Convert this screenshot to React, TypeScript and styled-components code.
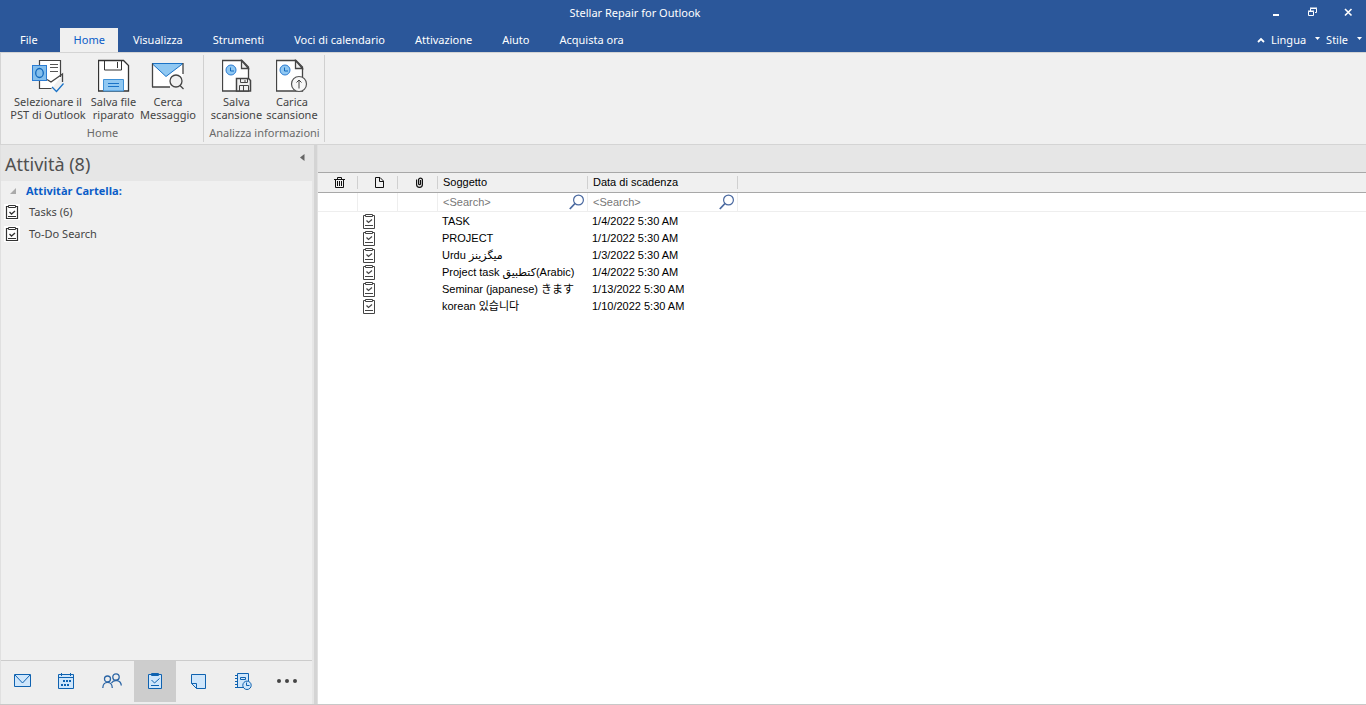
import React from "react";
import styled, { createGlobalStyle, css } from "styled-components";

const uiFont = '"Noto Sans", "Open Sans", sans-serif';
const gridFont = '"Liberation Sans", "DejaVu Sans", "Noto Sans CJK JP", "Noto Sans CJK KR", sans-serif';

const GlobalStyle = createGlobalStyle`
  * { box-sizing: border-box; }
  body { margin: 0; font-family: ${uiFont}; font-size: 11px; color: #444; background: #fff; }
  button, input { font: inherit; color: inherit; }
  button { border: 0; padding: 0; background: none; }
  svg { display: block; flex: none; }
`;

const Window = styled.div`
  display: flex;
  flex-direction: column;
  min-height: 100vh;
  border-bottom: 1px solid #c8c8c8;
`;

const TitleBar = styled.header`
  display: grid;
  grid-template-columns: 1fr auto 1fr;
  align-items: center;
  height: 28px;
  padding-right: 12px;
  background: #2b579a;
  color: #fff;
`;

const AppTitle = styled.h1`
  grid-column: 2;
  align-self: start;
  margin: 0 84px 0 0;
  font-size: 11px;
  font-weight: 400;
  line-height: 26px;
`;

const WindowControls = styled.div`
  display: flex;
  justify-content: flex-end;
  gap: 24px;
  padding-bottom: 4px;
`;

const MenuBar = styled.nav`
  display: flex;
  height: 24px;
  background: #2b579a;
  color: #fff;
`;

const Tab = styled.button<{ $active?: boolean; $first?: boolean }>`
  padding: 0 15px;
  line-height: 24px;
  ${(p) => p.$first && css`padding: 0 22px 0 20px;`}
  ${(p) => p.$active && css`
    padding: 0 13px 0 14px;
    background: #f0f0f0;
    color: #0a5cc8;
  `}
`;

const MenuRight = styled.div`
  display: flex;
  align-items: center;
  gap: 6px;
  margin-left: auto;
  padding-right: 4px;
`;

const MenuButton = styled.button`
  display: flex;
  align-items: center;
  gap: 9px;
  line-height: 24px;
`;

const Ribbon = styled.section`
  display: flex;
  height: 93px;
  padding-top: 2px;
  border: 1px solid #d4d4d4;
  border-right: 0;
  background: #f0f0f0;
`;

const RibbonGroup = styled.div`
  display: flex;
  flex-direction: column;
  height: 87px;
  padding: 4px 4px 0 5px;
  border-right: 1px solid #d0d0d0;
`;

const RibbonButtons = styled.div`
  display: flex;
  justify-content: center;
`;

const RibbonButton = styled.button<{ $width: number }>`
  display: flex;
  flex-direction: column;
  align-items: center;
  gap: 2px;
  width: ${(p) => p.$width}px;
  line-height: 13px;
  white-space: nowrap;
`;

const GroupLabel = styled.div`
  padding-top: 4px;
  line-height: 16px;
  text-align: center;
  color: #6a6a6a;
  white-space: nowrap;
`;

const Body = styled.div`
  display: flex;
  flex: 1;
`;

const Sidebar = styled.aside`
  display: flex;
  flex-direction: column;
  width: 314px;
  padding: 0 2px 0 0;
  border-left: 1px solid #e0e0e0;
  background: #e6e6e6;
`;

const Splitter = styled.div`
  width: 4px;
  border-right: 1px solid #e0e0e0;
  background: #d4d4d4;
`;

const SideHeader = styled.div`
  display: flex;
  justify-content: space-between;
  height: 36px;
  padding: 0 7px 0 4px;
`;

const SideTitle = styled.h2`
  margin: 0;
  font-size: 18px;
  font-weight: 400;
  line-height: 39px;
  color: #505050;
`;

const CollapseButton = styled.button`
  align-self: flex-start;
  padding-top: 9px;
`;

const FolderPane = styled.div`
  flex: 1;
  background: #f0f0f0;
`;

const FolderHeading = styled.button`
  display: flex;
  align-items: center;
  gap: 10px;
  height: 20px;
  padding: 0 9px;
  font-family: "Open Sans", sans-serif;
  font-weight: 700;
  line-height: 18px;
  color: #0a5cc8;
`;

const FolderLink = styled.a`
  display: flex;
  gap: 9px;
  height: 22px;
  padding: 3px 0 0 3px;
  line-height: 16px;
  color: #444;
  text-decoration: none;
`;

const ModuleNav = styled.nav`
  display: flex;
  height: 44px;
  border-top: 1px solid #ccc;
  background: #eee;
`;

const ModuleButton = styled.button<{ $active?: boolean; $width: number }>`
  display: flex;
  align-items: center;
  justify-content: center;
  width: ${(p) => p.$width}px;
  height: 41px;
  padding-bottom: 1px;
  background: ${(p) => (p.$active ? "#cdcdcd" : "none")};
`;

const Content = styled.main`
  flex: 1;
  padding-top: 27px;
  background: linear-gradient(#e6e6e6 27px, #fff 27px);
`;

const TaskTable = styled.table`
  width: 100%;
  table-layout: fixed;
  border-spacing: 0;
  font-family: ${gridFont};
  font-size: 11px;
  color: #000;
`;

const HeadCell = styled.th<{ $last?: boolean }>`
  height: 21px;
  padding: 0 0 0 5px;
  border: solid #a8a8a8;
  border-width: 1px 0;
  background: linear-gradient(#d0d0d0, #d0d0d0) right center / ${(p) => (p.$last ? 0 : 1)}px 13px no-repeat #f0f0f0;
  font-weight: 400;
  line-height: 19px;
  text-align: left;
`;

const HeadIcon = styled.span`
  display: flex;
  justify-content: center;
  padding-right: 2px;
`;

const FilterCell = styled.td<{ $last?: boolean }>`
  height: 19px;
  padding: 0;
  border-bottom: 1px solid #eee;
  border-right: ${(p) => (p.$last ? 0 : 1)}px solid #eee;
`;

const FilterBox = styled.label`
  display: flex;
  align-items: center;
  height: 18px;
  padding: 0 3px 0 5px;
`;

const FilterInput = styled.input`
  flex: 1;
  min-width: 0;
  height: 18px;
  padding: 0;
  border: 0;
  outline: 0;
  background: none;
  &::placeholder { color: #777; opacity: 1; }
`;

const Cell = styled.td`
  height: 17px;
  padding: 0 0 0 4px;
  line-height: 17px;
  white-space: nowrap;
  overflow: hidden;
`;

const CellLine = styled.div`
  height: 17px;
  line-height: 18px;
`;

const CellIcon = styled.div`
  display: flex;
  align-items: flex-end;
  height: 17px;
  padding-left: 1px;
`;

const SelectPstIcon = () => (
  <svg width="32" height="34" viewBox="0 0 32 34" fill="none" stroke="#444">
    <path d="M7.500 1.500h21v17l-9 11h-12z" fill="#fff" stroke="none" />
    <path d="M7.500 6V1.500h21V18" strokeWidth="1.200" />
    <path d="M7.500 22v7.500h12" strokeWidth="1.200" />
    <path d="M18 5.500h8M18 8.500h8M18 12.500h8" stroke="#555" />
    <path d="M15 20.500l4 2.500 11.500-8v8" strokeWidth="1.300" />
    <rect x=".5" y="6.500" width="14" height="15" fill="#83beec" stroke="#2b7cd3" />
    <ellipse cx="7.500" cy="14" rx="3.800" ry="4.500" stroke="#1168bd" strokeWidth="1.300" />
    <path d="M20 28l4.500 4.500 7-8" stroke="#1a73c7" strokeWidth="1.300" />
  </svg>
);

const SaveFileIcon = () => (
  <svg width="32" height="34" viewBox="0 0 32 34" fill="none" stroke="#333">
    <path d="M.5 1.500h25l5 5v25.500H.5z" fill="#fff" strokeWidth="1.300" />
    <path d="M6.500 1v10h17V1M19.500 3v6" />
    <path d="M5.500 32V20.500h20V32z" fill="#90c8f2" stroke="#3f91d6" />
    <path d="M10 24.500h11M10 27.500h11" stroke="#1a73c7" />
  </svg>
);

const SearchMailIcon = () => (
  <svg width="34" height="34" viewBox="0 0 34 34" fill="none" stroke="#444">
    <path d="M1 4h31v14l-8-2-5 5v7H1z" fill="#fff" stroke="none" />
    <path d="M1 4.500h31L15 17.500z" fill="#90c8f2" stroke="#1a73c7" />
    <path d="M1.500 28V4.500M1 28h18M32 4v11" strokeWidth="1.300" />
    <circle cx="25" cy="22" r="6" fill="#f0f0f0" strokeWidth="1.300" />
    <path d="M29 26.500l3.500 3.500" strokeWidth="1.300" />
  </svg>
);

const ScanPage = () => (
  <>
    <path d="M.5 1.500h19.500l6.500 6.500v24H.500z" fill="#fff" strokeWidth="1.300" />
    <path d="M19.500 1.500v8h7z" fill="#f0f0f0" strokeWidth="1.300" />
    <circle cx="9" cy="11" r="5" fill="#90c8f2" stroke="#2b7cd3" />
    <path d="M8.500 8.500v3.500h3.500" stroke="#1168bd" />
  </>
);

const SaveScanIcon = () => (
  <svg width="30" height="34" viewBox="0 0 30 34" fill="none" stroke="#444">
    <ScanPage />
    <path d="M14.500 19.500h12l2 2V32h-14z" fill="#f0f0f0" strokeWidth="1.500" />
    <path d="M18.500 19.500v4h7v-4M17.500 32v-5.500h9V32M21.500 27v5M23 21v2" />
  </svg>
);

const LoadScanIcon = () => (
  <svg width="32" height="34" viewBox="0 0 32 34" fill="none" stroke="#444">
    <ScanPage />
    <circle cx="23" cy="25" r="7.500" fill="#f7f7f7" stroke="#555" strokeWidth="1.200" />
    <path d="M23 29.500v-8M20.500 23.500L23 21l2.500 2.500" />
  </svg>
);

const ClipboardIcon = () => (
  <svg width="16" height="16" viewBox="0 0 16 16" fill="none" stroke="#333">
    <path d="M0 0h16v16H0z" fill="#fff" stroke="none" />
    <path d="M4.500 2.500h-2v12h11v-12h-2" strokeWidth="1.200" />
    <path d="M4.500 1.500h7v2h-7zM4 12.500h8" />
    <path d="M5.500 8l2 2 3.500-3" strokeWidth="1.300" />
  </svg>
);

const RowTaskIcon = () => (
  <svg width="12" height="16" viewBox="0 0 12 16" fill="none" stroke="#444">
    <path d="M2 2.500H.500v13h11v-13H10" />
    <path d="M2.500 1.500h7v2h-7zM2 12.500h8" />
    <path d="M3.500 7.500l2 2L9 6.500" strokeWidth="1.200" />
  </svg>
);

const LensIcon = () => (
  <svg width="15" height="16" viewBox="0 0 15 16" fill="none" stroke="#4a69a0">
    <circle cx="9.500" cy="6" r="4.900" strokeWidth="1.200" />
    <path d="M6 9.500L.8 15" strokeWidth="1.800" />
  </svg>
);

const TrashIcon = () => (
  <svg width="11" height="11" viewBox="0 0 11 11" fill="none" stroke="#111">
    <path d="M0 2.500h11M3.500 2V.500h4V2M1.500 3v7.500h8V3" />
    <path d="M3.500 4v5M5.500 4v5M7.500 4v5" />
  </svg>
);

const PageIcon = () => (
  <svg width="9" height="11" viewBox="0 0 9 11" fill="none" stroke="#111">
    <path d="M.500.500h4.500l3.500 3.500v6.500H.500zM4.500.500v4h4" />
  </svg>
);

const ClipIcon = () => (
  <svg width="7" height="11" viewBox="0 0 7 11" fill="none" stroke="#111" strokeWidth="1.200">
    <path d="M.600 2.500v5a2.800 2.800 0 0 0 5.800 0V2.500a2 2 0 0 0-3.800 0v4.500a1 1 0 0 0 1.900 0V3" />
  </svg>
);

const MailModuleIcon = () => (
  <svg width="17" height="14" viewBox="0 0 17 14" fill="#cfe6fb" stroke="#0f62b0">
    <path d="M.500.500h16v12H.500z" />
    <path d="M1 1l7.500 8L16 1" />
  </svg>
);

const CalendarModuleIcon = () => (
  <svg width="16" height="16" viewBox="0 0 16 16" fill="#cfe6fb" stroke="#0f62b0">
    <path d="M.500 1.500h15v14H.500zM0 4.500h16M3.500 0v3M12.500 0v3" />
    <path d="M5 8h2M8 8h2M11 8h2M3 12h2M6 12h2M9 12h2" strokeWidth="2" />
  </svg>
);

const PeopleModuleIcon = () => (
  <svg width="22" height="16" viewBox="-2 0 22 16" fill="none" stroke="#2b65a5" strokeWidth="1.300">
    <circle cx="5.500" cy="6" r="3" />
    <circle cx="14" cy="4" r="3.200" />
    <path d="M.800 15c0-7.500 9.500-7.500 9.500 0M9.500 10c2.500-4 9.500-3 9.800 2.500" />
  </svg>
);

const TaskModuleIcon = () => (
  <svg width="14" height="16" viewBox="0 0 14 16" fill="#cfe6fb" stroke="#0f62b0">
    <path d="M.500 1.500h13v14H.500zM3.500.500h7v2h-7z" />
    <path d="M3.500 7l3 3 5-4.500M3 12.500h8" fill="none" />
  </svg>
);

const NoteModuleIcon = () => (
  <svg width="15" height="16" viewBox="0 0 15 16" fill="#cfe6fb" stroke="#0f62b0">
    <path d="M.500 1.500h14v14h-9l-5-5zM.500 10.500h5v5" />
  </svg>
);

const JournalModuleIcon = () => (
  <svg width="17" height="18" viewBox="0 0 17 18" fill="#cfe6fb" stroke="#0f62b0">
    <path d="M2.500 1.500h11v14h-11zM5.500 5.500h5v2h-5zM0 3.500h3M0 6.500h3M0 9.500h3M0 12.500h3M0 15.500h3" />
    <circle cx="12" cy="13.300" r="4.200" />
    <path d="M11.500 10.500v3h3" fill="none" />
  </svg>
);

const MoreIcon = () => (
  <svg width="20" height="4" viewBox="0 0 20 4" fill="#444">
    <circle cx="2" cy="2" r="2" />
    <circle cx="10" cy="2" r="2" />
    <circle cx="18" cy="2" r="2" />
  </svg>
);

const DropArrow = () => (
  <svg width="5" height="9" viewBox="0 0 5 9" fill="#fff">
    <path d="M0 1h5L2.500 4z" />
  </svg>
);

const tabs = ["File", "Home", "Visualizza", "Strumenti", "Voci di calendario", "Attivazione", "Aiuto", "Acquista ora"];

const modules = [
  { name: "Posta", icon: <MailModuleIcon />, width: 43 },
  { name: "Calendario", icon: <CalendarModuleIcon />, width: 44 },
  { name: "Contatti", icon: <PeopleModuleIcon />, width: 46 },
  { name: "Attività", icon: <TaskModuleIcon />, width: 42, active: true },
  { name: "Note", icon: <NoteModuleIcon />, width: 45 },
  { name: "Diario", icon: <JournalModuleIcon />, width: 45 },
  { name: "Altro", icon: <MoreIcon />, width: 42 },
];

const tasks = [
  ["TASK", "1/4/2022 5:30 AM"],
  ["PROJECT", "1/1/2022 5:30 AM"],
  ["Urdu میگزینز", "1/3/2022 5:30 AM"],
  ["Project task کتطبیق(Arabic)", "1/4/2022 5:30 AM"],
  ["Seminar (japanese) きます", "1/13/2022 5:30 AM"],
  ["korean 있습니다", "1/10/2022 5:30 AM"],
];

export default function App() {
  return (
    <Window>
      <GlobalStyle />
      <TitleBar>
        <span />
        <AppTitle>Stellar Repair for Outlook</AppTitle>
        <WindowControls>
          <button aria-label="Riduci a icona">
            <svg width="12" height="10" viewBox="0 0 12 10" fill="#fff"><path d="M3 7h6v2H3z" /></svg>
          </button>
          <button aria-label="Ripristina">
            <svg width="12" height="10" viewBox="0 0 12 10" fill="none" stroke="#fff">
              <path d="M4.500 4V1.500h6v4H9M4 1h7M2.500 4.500h5v4h-5zM2 4h6" />
            </svg>
          </button>
          <button aria-label="Chiudi">
            <svg width="12" height="10" viewBox="0 0 12 10" stroke="#fff" strokeWidth="1.600"><path d="M3 2l6.500 6.500M9.500 2L3 8.500" /></svg>
          </button>
        </WindowControls>
      </TitleBar>
      <MenuBar>
        {tabs.map((t, i) => (
          <Tab key={t} $first={i === 0} $active={i === 1}>{t}</Tab>
        ))}
        <MenuRight>
          <button aria-label="Comprimi barra">
            <svg width="8" height="6" viewBox="0 0 8 6" fill="none" stroke="#fff" strokeWidth="1.800"><path d="M1 5l3-3 3 3" /></svg>
          </button>
          <MenuButton>Lingua <DropArrow /></MenuButton>
          <MenuButton>Stile <DropArrow /></MenuButton>
        </MenuRight>
      </MenuBar>
      <Ribbon>
        <RibbonGroup>
          <RibbonButtons>
            <RibbonButton $width={84}><SelectPstIcon /><span>Selezionare il<br />PST di Outlook</span></RibbonButton>
            <RibbonButton $width={47}><SaveFileIcon /><span>Salva file<br />riparato</span></RibbonButton>
            <RibbonButton $width={62}><SearchMailIcon /><span>Cerca<br />Messaggio</span></RibbonButton>
          </RibbonButtons>
          <GroupLabel>Home</GroupLabel>
        </RibbonGroup>
        <RibbonGroup>
          <RibbonButtons>
            <RibbonButton $width={55}><SaveScanIcon /><span>Salva<br />scansione</span></RibbonButton>
            <RibbonButton $width={56}><LoadScanIcon /><span>Carica<br />scansione</span></RibbonButton>
          </RibbonButtons>
          <GroupLabel>Analizza informazioni</GroupLabel>
        </RibbonGroup>
      </Ribbon>
      <Body>
        <Sidebar>
          <SideHeader>
            <SideTitle>Attività (8)</SideTitle>
            <CollapseButton aria-label="Comprimi riquadro">
              <svg width="5" height="7" viewBox="0 0 5 7" fill="#666"><path d="M4.500 0v7L0 3.500z" /></svg>
            </CollapseButton>
          </SideHeader>
          <FolderPane>
            <FolderHeading>
              <svg width="6" height="6" viewBox="0 0 6 6" fill="#aaa"><path d="M6 0v6H0z" /></svg>
              Attivitàr Cartella:
            </FolderHeading>
            <FolderLink href="#tasks"><ClipboardIcon />Tasks (6)</FolderLink>
            <FolderLink href="#todo"><ClipboardIcon />To-Do Search</FolderLink>
          </FolderPane>
          <ModuleNav>
            {modules.map((m) => (
              <ModuleButton key={m.name} aria-label={m.name} $width={m.width} $active={m.active}>{m.icon}</ModuleButton>
            ))}
          </ModuleNav>
        </Sidebar>
        <Splitter />
        <Content>
          <TaskTable>
            <colgroup>
              <col width="40" />
              <col width="40" />
              <col width="40" />
              <col width="150" />
              <col width="150" />
              <col />
            </colgroup>
            <thead>
              <tr>
                <HeadCell aria-label="Elimina"><HeadIcon><TrashIcon /></HeadIcon></HeadCell>
                <HeadCell aria-label="Tipo"><HeadIcon><PageIcon /></HeadIcon></HeadCell>
                <HeadCell aria-label="Allegato"><HeadIcon><ClipIcon /></HeadIcon></HeadCell>
                <HeadCell>Soggetto</HeadCell>
                <HeadCell>Data di scadenza</HeadCell>
                <HeadCell $last />
              </tr>
            </thead>
            <tbody>
              <tr>
                <FilterCell />
                <FilterCell />
                <FilterCell />
                <FilterCell>
                  <FilterBox><FilterInput aria-label="Cerca soggetto" placeholder="<Search>" /><LensIcon /></FilterBox>
                </FilterCell>
                <FilterCell>
                  <FilterBox><FilterInput aria-label="Cerca data" placeholder="<Search>" /><LensIcon /></FilterBox>
                </FilterCell>
                <FilterCell $last />
              </tr>
              {tasks.map(([subject, due]) => (
                <tr key={subject}>
                  <Cell />
                  <Cell><CellIcon><RowTaskIcon /></CellIcon></Cell>
                  <Cell />
                  <Cell><CellLine>{subject}</CellLine></Cell>
                  <Cell><CellLine>{due}</CellLine></Cell>
                  <Cell />
                </tr>
              ))}
            </tbody>
          </TaskTable>
        </Content>
      </Body>
    </Window>
  );
}
